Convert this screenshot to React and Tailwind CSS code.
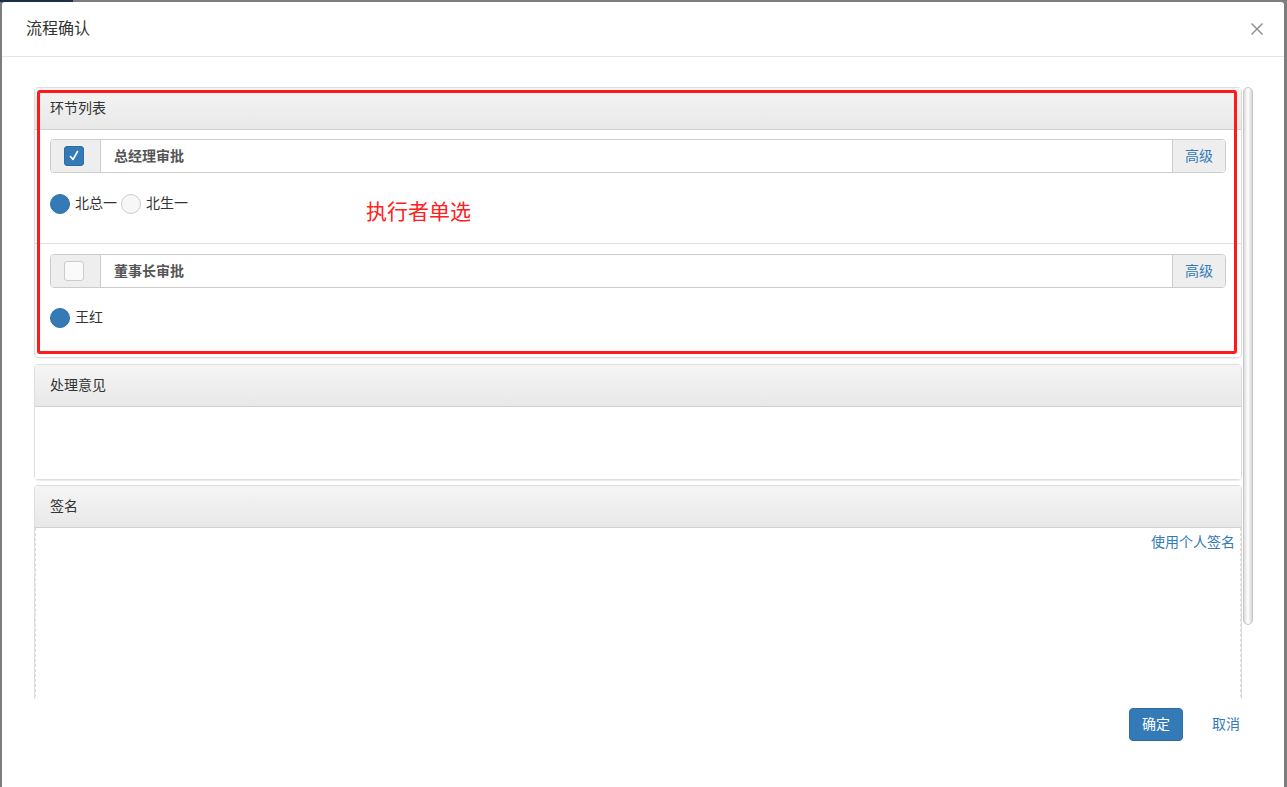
import React from "react";

const FONT = { fontFamily: '"Liberation Sans", "Noto Sans CJK SC", sans-serif' };

function Checkbox({ checked }) {
  if (checked) {
    return (
      <div className="w-[20px] h-[20px] rounded-[3px] bg-[#337ab7] border border-[#2e6da4] flex items-center justify-center">
        <svg width="12" height="12" viewBox="0 0 12 12">
          <path d="M2.5 6.5 L5 9.5 L9.5 1.5" fill="none" stroke="#fff" strokeWidth="1.6" strokeLinecap="round" strokeLinejoin="round" />
        </svg>
      </div>
    );
  }
  return <div className="w-[20px] h-[20px] rounded-[3px] bg-[#fafafa] border border-[#cccccc]" />;
}

function Radio({ checked, label }) {
  return (
    <div className="flex items-center gap-[5px]">
      {checked ? (
        <div className="w-[20px] h-[20px] rounded-full bg-[#337ab7] border border-[#3170a8]" />
      ) : (
        <div className="w-[20px] h-[20px] rounded-full bg-[#f7f7f7] border border-[#cccccc]" />
      )}
      <span className="text-[14px] text-[#333]">{label}</span>
    </div>
  );
}

function InputGroup({ checked, text }) {
  return (
    <div className="flex h-[34px] border border-[#cccccc] rounded-[4px] overflow-hidden">
      <div className="w-[50px] bg-[#eeeeee] border-r border-[#cccccc] flex items-center justify-center pr-[3px]">
        <Checkbox checked={checked} />
      </div>
      <div className="flex-1 flex items-center pl-[13px] text-[14px] font-bold text-[#555]">{text}</div>
      <div className="w-[53px] bg-[#eeeeee] border-l border-[#cccccc] flex items-center justify-center text-[14px] text-[#337ab7]">
        高级
      </div>
    </div>
  );
}

function PanelHeader({ children }) {
  return (
    <div className="h-[42px] flex items-center pl-[15px] text-[14px] text-[#333] bg-gradient-to-b from-[#f5f5f5] to-[#e8e8e8] border-b border-[#d0d0d0]">
      {children}
    </div>
  );
}

export default function App() {
  return (
    <div className="w-[1287px] h-[787px] overflow-hidden flex flex-col bg-[#7d7d7d]" style={FONT}>
      <div className="h-[2px] flex shrink-0">
        <div className="w-[73px] bg-[#1d2d4f]" />
        <div className="flex-1 bg-[#7d7d7d]" />
      </div>
      <div className="flex-1 flex pl-[2px] pr-[3px]">
        <div className="flex-1 bg-white rounded-tl-[3px] rounded-tr-[3px] flex flex-col">
          {/* header */}
          <div className="h-[55px] border-b border-[#e5e5e5] flex items-center justify-between pl-[24px] pr-[20px] shrink-0">
            <span className="text-[16px] text-[#333]">流程确认</span>
            <svg width="14" height="14" viewBox="0 0 14 14">
              <path d="M1.5 1.5 L12.5 12.5 M12.5 1.5 L1.5 12.5" stroke="#8a8a8a" strokeWidth="1.4" />
            </svg>
          </div>
          {/* body */}
          <div className="h-[642px] overflow-hidden flex pl-[32px] pt-[30px] shrink-0">
            <div className="w-[1208px] flex flex-col shrink-0">
              {/* Panel 1 */}
              <div className="relative border border-[#dddddd] rounded-[4px] shadow-[0_1px_1px_rgba(0,0,0,0.05)]">
                <PanelHeader>环节列表</PanelHeader>
                <div className="pt-[9px] pb-[29px] px-[15px] flex flex-col gap-[20px]">
                  <InputGroup checked text="总经理审批" />
                  <div className="flex items-center gap-[4px]">
                    <Radio checked label="北总一" />
                    <Radio label="北生一" />
                  </div>
                </div>
                <div className="border-t border-[#dddddd]" />
                <div className="pt-[10px] pb-[29px] px-[15px] flex flex-col gap-[19px]">
                  <InputGroup text="董事长审批" />
                  <div className="flex items-center">
                    <Radio checked label="王红" />
                  </div>
                </div>
                <div className="absolute left-[2px] top-[2px] right-[4px] bottom-[3px] border-[3px] border-[#ff1a1a] rounded-[3px] pointer-events-none" />
                <div className="absolute left-[331px] top-[111px] text-[21px] leading-[26px] text-[#ff2020]">执行者单选</div>
              </div>
              {/* Panel 2 */}
              <div className="mt-[6px] border border-[#dddddd] rounded-[4px] shadow-[0_1px_1px_rgba(0,0,0,0.08)]">
                <PanelHeader>处理意见</PanelHeader>
                <div className="h-[72px] bg-white" />
              </div>
              {/* Panel 3 */}
              <div className="mt-[5px] border border-[#dddddd] border-b-0 rounded-t-[4px]">
                <PanelHeader>签名</PanelHeader>
                <div className="h-[300px] border border-dashed border-[#dddddd] border-t-0 flex justify-end pt-[5px] pr-[5px]">
                  <span className="text-[14px] text-[#337ab7] leading-[18px]">使用个人签名</span>
                </div>
              </div>
            </div>
            <div className="ml-[1px] w-[10px] h-[538px] shrink-0 rounded-full border border-[#c8c8c8] bg-gradient-to-r from-[#dcdcdc] via-white to-[#d4d4d4]" />
          </div>
          {/* footer */}
          <div className="flex justify-end items-start gap-[29px] pr-[44px] pt-[9px]">
            <div className="w-[54px] h-[33px] rounded-[4px] bg-[#337ab7] border border-[#2e6da4] flex items-center justify-center text-[14px] text-white">
              确定
            </div>
            <div className="h-[33px] flex items-center text-[14px] text-[#337ab7]">取消</div>
          </div>
        </div>
      </div>
    </div>
  );
}
